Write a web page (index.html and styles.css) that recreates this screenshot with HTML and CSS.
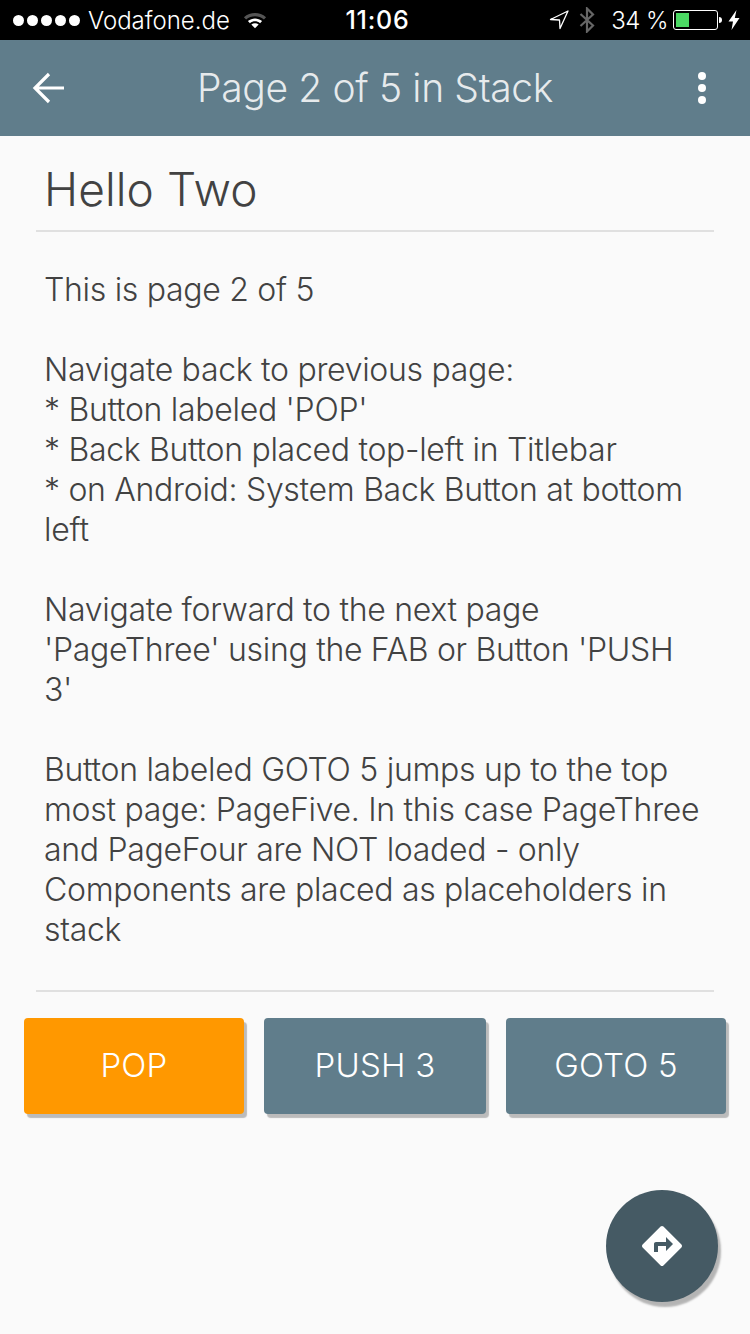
FILE: index.html
```html
<!DOCTYPE html>
<html lang="en">
<head>
<meta charset="UTF-8">
<meta name="viewport" content="width=device-width, initial-scale=1.0">
<title>Page 2 of 5 in Stack</title>
<link rel="stylesheet" href="styles.css">
</head>
<body>

<div class="phone">
    <div class="status-bar">
        <div class="status-left">
            <div class="signal">
                <span class="dot"></span><span class="dot"></span><span class="dot"></span><span class="dot"></span><span class="dot"></span>
            </div>
            <span class="carrier">Vodafone.de</span>
            <svg class="wifi" width="24" height="18" viewBox="0 0 26 19">
                <path d="M1 6.500 C8 0.500 18 0.500 25 6.500 L22.600 9 C17 4.300 9 4.300 3.400 9 Z" fill="#555"/>
                <path d="M5.300 10.700 C10 6.800 16 6.800 20.700 10.700 L18.500 13 C15 10.200 11 10.200 7.500 13 Z" fill="#fff"/>
                <path d="M9 14.400 C11.500 12.500 14.500 12.500 17 14.400 L13 18.400 Z" fill="#fff"/>
            </svg>
        </div>
        <div class="status-time">11:06</div>
        <div class="status-right">
            <svg class="location" width="20" height="20" viewBox="0 0 20 20">
                <path d="M19 1 L1.500 9.500 L10.500 10 L11 18.500 Z" fill="none" stroke="#fff" stroke-width="1.300" stroke-linejoin="round"/>
            </svg>
            <svg class="bluetooth" width="16" height="26" viewBox="0 0 16 26">
                <path d="M1.500 7 L14 18.500 L8 24.500 L8 1.500 L14 7.500 L1.500 19" fill="none" stroke="#666" stroke-width="2.200"/>
            </svg>
            <span class="battery-text">34 %</span>
            <div class="battery">
                <div class="battery-level" style="width: 34%"></div>
            </div>
            <div class="battery-cap"></div>
            <svg class="bolt" width="12" height="20" viewBox="0 0 12 20">
                <path d="M8.500 0 L0.500 11.500 L5 11.500 L3.500 20 L11.500 8 L6.800 8 Z" fill="#fff"/>
            </svg>
        </div>
    </div>

    <div class="app-bar">
        <svg class="back-icon" width="48" height="48" viewBox="0 0 48 48">
            <path d="M40 24 H11 M25 10 L11 24 L25 38" fill="none" stroke="#fff" stroke-width="3.200"/>
        </svg>
        <div class="app-title">Page 2 of 5 in Stack</div>
        <div class="more-icon">
            <span></span><span></span><span></span>
        </div>
    </div>

    <div class="content">
        <div class="card">
            <h1 class="card-title">Hello Two</h1>
            <div class="card-text">This is page 2 of 5

Navigate back to previous page:
* Button labeled 'POP'
* Back Button placed top-left in Titlebar
* on Android: System Back Button at bottom left

Navigate forward to the next page 'PageThree' using the FAB or Button 'PUSH 3'

Button labeled GOTO 5 jumps up to the top most page: PageFive. In this case PageThree and PageFour are NOT loaded - only Components are placed as placeholders in stack</div>
        </div>
        <div class="buttons">
            <div class="btn btn-pop">POP</div>
            <div class="btn">PUSH 3</div>
            <div class="btn">GOTO 5</div>
        </div>
    </div>

    <div class="fab">
        <svg width="48" height="48" viewBox="0 0 24 24">
            <path fill="#fff" d="M21.710 11.290l-9-9c-.39-.39-1.020-.39-1.410 0l-9 9c-.39.39-.39 1.020 0 1.410l9 9c.39.39 1.020.39 1.410 0l9-9c.39-.38.39-1.010 0-1.410zM14 14.500V12h-4v3H8v-4c0-.55.45-1 1-1h5V7.500l3.500 3.500-3.500 3.500z"/>
        </svg>
    </div>
</div>

</body>
</html>
```

FILE: styles.css
```css
html, body {
    margin: 0;
    padding: 0;
}

body {
    font-family: Inter, Roboto, sans-serif;
    background-color: #fafafa;
}

.phone {
    position: relative;
    width: 750px;
    height: 1334px;
    overflow: hidden;
    background-color: #fafafa;
}

.status-bar {
    height: 40px;
    background-color: #000;
    color: #fff;
    display: grid;
    grid-template-columns: 1fr auto 1fr;
    align-items: center;
    font-size: 24px;
    font-weight: 300;
}

.status-left {
    display: flex;
    align-items: center;
    padding-left: 13px;
}

.signal {
    display: flex;
    gap: 3px;
    margin-right: 8px;
}

.dot {
    width: 11px;
    height: 11px;
    border-radius: 50%;
    background-color: #fff;
}

.wifi {
    margin-left: 13px;
}

.status-time {
    padding-left: 5px;
    font-weight: 500;
    font-size: 25px;
    letter-spacing: 0.8px;
}

.status-right {
    display: flex;
    align-items: center;
    justify-content: flex-end;
    padding-right: 10px;
}

.location {
    margin-right: 10px;
}

.bluetooth {
    margin-right: 16px;
}

.battery-text {
    margin-right: 5px;
    letter-spacing: -0.5px;
}

.battery {
    box-sizing: border-box;
    width: 45px;
    height: 20px;
    padding: 2px;
    border: 1px solid #fff;
    border-radius: 3px;
}

.battery-level {
    height: 100%;
    background-color: #4cd964;
}

.battery-cap {
    width: 3px;
    height: 6px;
    margin-left: 1px;
    margin-right: 6px;
    border-radius: 0 3px 3px 0;
    background-color: #fff;
}

.app-bar {
    height: 96px;
    background-color: #607d8b;
    display: flex;
    align-items: center;
    justify-content: center;
    position: relative;
}

.back-icon {
    position: absolute;
    left: 24px;
    top: 24px;
}

.app-title {
    padding-bottom: 2px;
    color: rgba(255, 255, 255, 0.85);
    font-size: 39px;
    font-weight: 300;
    letter-spacing: -0.35px;
}

.more-icon {
    position: absolute;
    right: 44px;
    top: 32px;
    display: flex;
    flex-direction: column;
    gap: 4px;
}

.more-icon span {
    width: 8px;
    height: 8px;
    border-radius: 50%;
    background-color: #fff;
}

.content {
    display: flex;
    flex-direction: column;
}

.card {
    margin: 0 36px;
    border-bottom: 2px solid #e0e0e0;
}

.card-title {
    margin: 0;
    padding: 23px 8px 0;
    height: 71px;
    border-bottom: 2px solid #e0e0e0;
    color: #424242;
    font-size: 46px;
    line-height: 60px;
    font-weight: 300;
    letter-spacing: 0.1px;
}

.card-text {
    padding: 38px 8px 40px;
    color: #424242;
    font-size: 32px;
    line-height: 40px;
    font-weight: 300;
    letter-spacing: -0.3px;
    white-space: pre-line;
}

.buttons {
    display: grid;
    grid-template-columns: 220px 222px 220px;
    gap: 20px;
    padding: 26px 24px 0;
}

.btn {
    box-sizing: border-box;
    height: 96px;
    padding-bottom: 2px;
    display: flex;
    align-items: center;
    justify-content: center;
    border-radius: 4px;
    background-color: #607d8b;
    color: #fff;
    font-size: 33px;
    font-weight: 300;
    letter-spacing: 0.2px;
    box-shadow: 3px 4px 1px rgba(0, 0, 0, 0.25);
}

.btn-pop {
    background-color: #ff9800;
}

.fab {
    position: absolute;
    left: 606px;
    top: 1190px;
    width: 112px;
    height: 112px;
    border-radius: 50%;
    background-color: #455a64;
    display: flex;
    align-items: center;
    justify-content: center;
    box-shadow: 3px 5px 2px rgba(0, 0, 0, 0.28);
}
```
